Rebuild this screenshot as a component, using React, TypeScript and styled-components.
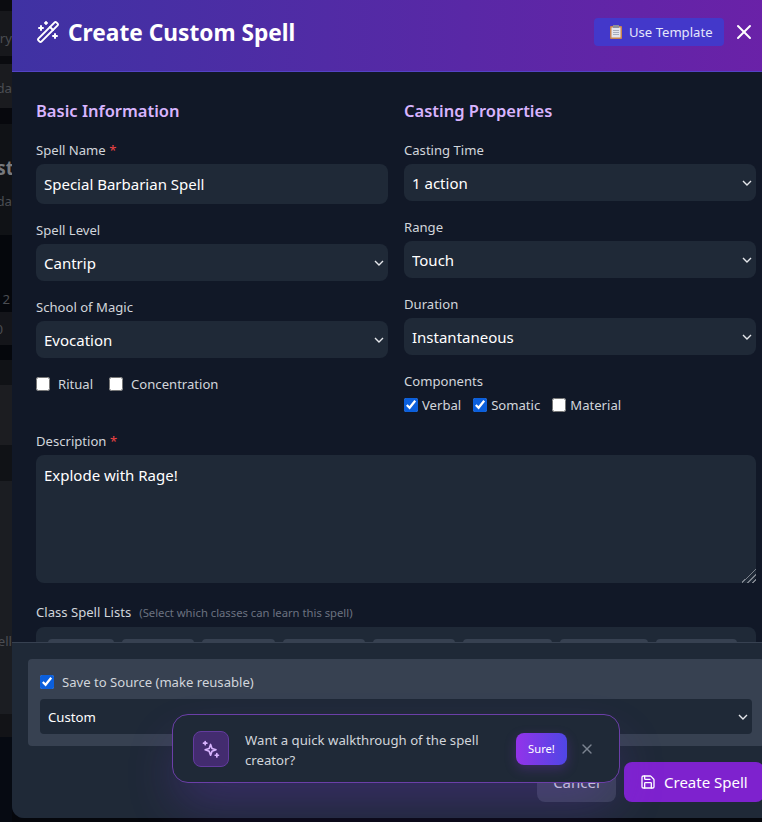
import React from "react"
import styled, { createGlobalStyle, css } from "styled-components"
import { Save, WandSparkles, X } from "lucide-react"

const GlobalStyle = createGlobalStyle`
  html, body {
    margin: 0;
    height: 100%;
    overflow: hidden;
    background: #05070c;
  }
  * {
    box-sizing: border-box;
  }
`

const fontStack = `"Noto Sans", "Open Sans", sans-serif`

const selectLook = css`
  display: block;
  width: 100%;
  padding: 0 8px;
  border: none;
  appearance: none;
  background: #1f2937
    url("data:image/svg+xml,%3Csvg xmlns='http://www.w3.org/2000/svg' width='10' height='6' viewBox='0 0 10 6'%3E%3Cpath d='M1 1l4 4 4-4' fill='none' stroke='%23e5e7eb' stroke-width='1.4'/%3E%3C/svg%3E")
    no-repeat right 4px center;
  color: #fff;
  font-family: inherit;
`

const Page = styled.div`
  position: relative;
  display: flex;
  align-items: flex-start;
  width: 762px;
  height: 822px;
  overflow: hidden;
  font-family: ${fontStack};
`

/* the dimmed page that peeks out left of the modal */
const Backdrop = styled.div`
  flex: none;
  display: flex;
  flex-direction: column;
  width: 12px;
  height: 822px;
  overflow: hidden;
`

const Sliver = styled.div<{ $h: number; $bg: string; $pt?: number }>`
  flex: none;
  display: flex;
  align-items: center;
  justify-content: flex-end;
  height: ${(p) => p.$h}px;
  padding-top: ${(p) => p.$pt ?? 0}px;
  background: ${(p) => p.$bg};
  color: #4b4d52;
  font-size: 13.2px;
  white-space: nowrap;
  overflow: hidden;
`

const SliverBold = styled.span`
  margin-right: -2px;
  color: #77797d;
  font-size: 19px;
  font-weight: 700;
`

const SliverDigit = styled.span<{ $right: number }>`
  margin-right: ${(p) => p.$right}px;
`

const Modal = styled.div`
  flex: none;
  display: flex;
  flex-direction: column;
  width: 768px;
  height: 818px;
  background: #111827;
  border-radius: 0 0 12px 12px;
  overflow: hidden;
`

const Header = styled.header`
  flex: none;
  display: flex;
  align-items: center;
  justify-content: space-between;
  height: 72px;
  padding: 0 24px 8px;
  background: linear-gradient(90deg, #3f32a3, #6b21a8);
  border-bottom: 1px solid #5343c4;
`

const Title = styled.h2`
  display: flex;
  align-items: center;
  gap: 8px;
  margin: 0;
  color: #fff;
  font-size: 22.7px;
  line-height: 32px;
  font-weight: 700;
`

const TitleText = styled.span`
  padding-top: 2px;
`

const HeaderActions = styled.div`
  display: flex;
  align-items: center;
  gap: 8px;
`

const TemplateButton = styled.button`
  display: flex;
  align-items: center;
  gap: 7px;
  height: 28px;
  width: 130px;
  padding: 0 0 0 16px;
  border: none;
  border-radius: 4px;
  background: #4338ca;
  color: #e5e7fb;
  font-family: inherit;
  font-size: 13.1px;
  white-space: nowrap;
`

const CloseButton = styled.button`
  display: flex;
  padding: 0;
  border: none;
  background: none;
  color: #fff;
`

const Body = styled.div`
  flex: 1;
  min-height: 0;
  padding: 24px 24px 0;
  overflow: hidden;
`

const Columns = styled.div`
  display: grid;
  grid-template-columns: 1fr 1fr;
  gap: 16px;
`

const SectionTitle = styled.h3`
  margin: 0 0 15px;
  padding-top: 1px;
  color: #d8b4fe;
  font-size: 16.5px;
  line-height: 28px;
  font-weight: 600;
`

const Field = styled.div`
  margin-bottom: 16px;
`

const DescriptionField = styled.div`
  margin: 16px 0 19px;
`

const Label = styled.label`
  display: block;
  margin-bottom: 4px;
  color: #d1d5db;
  font-size: 13.1px;
  line-height: 20px;
`

const Required = styled.span`
  color: #ef4444;
`

const TextInput = styled.input`
  display: block;
  width: 100%;
  height: 40px;
  padding: 0 8px;
  border: none;
  border-radius: 8px;
  background: #1f2937;
  color: #fff;
  font-family: inherit;
  font-size: 15px;
`

const Select = styled.select`
  ${selectLook}
  height: 37px;
  border-radius: 8px;
  font-size: 15px;
`

const CheckRow = styled.div<{ $gap: number }>`
  display: flex;
  align-items: center;
  gap: ${(p) => p.$gap}px;
`

const Check = styled.label<{ $gap: number }>`
  display: flex;
  align-items: center;
  gap: ${(p) => p.$gap}px;
  color: #d1d5db;
  font-size: 13.1px;
  line-height: 20px;
`

const Box = styled.input.attrs({ type: "checkbox" })`
  flex: none;
  width: 14px;
  height: 14px;
  margin: 0;
  accent-color: #0b5fdc;
`

const TextArea = styled.textarea`
  display: block;
  width: 100%;
  height: 128px;
  padding: 8px;
  border: none;
  border-radius: 8px;
  background: #1f2937;
  color: #fff;
  font-family: inherit;
  font-size: 15px;
  line-height: 24px;
  resize: vertical;

  &::-webkit-resizer {
    background: linear-gradient(
      135deg,
      transparent 50%,
      #7b818b 50% 56%,
      transparent 56% 68%,
      #7b818b 68% 74%,
      transparent 74% 86%,
      #7b818b 86% 92%,
      transparent 92%
    );
  }
`

const Hint = styled.span`
  margin-left: 8px;
  color: #6b7280;
  font-size: 11.25px;
`

const ClassPanel = styled.div`
  display: flex;
  gap: 8px;
  padding: 12px;
  border-radius: 8px;
  background: #1f2937;
`

const ClassChip = styled.button<{ $w: number }>`
  flex: none;
  width: ${(p) => p.$w}px;
  height: 34px;
  padding: 8px 0;
  border: none;
  border-radius: 4px;
  background: #374151;
  color: #d1d5db;
  font-family: inherit;
  font-size: 13px;
`

const Footer = styled.footer`
  flex: none;
  height: 176px;
  padding: 16px;
  background: #1f2937;
  border-top: 1px solid #374151;
`

const SourceBox = styled.div`
  display: flex;
  flex-direction: column;
  gap: 7px;
  height: 87px;
  padding: 13px 12px 12px;
  border-radius: 4px;
  background: #374151;
`

const SourceSelect = styled.select`
  ${selectLook}
  height: 35px;
  border-radius: 4px;
  font-size: 13.2px;
`

const FooterActions = styled.div`
  display: flex;
  justify-content: flex-end;
  gap: 8px;
  margin-top: 16px;
`

const CancelButton = styled.button`
  height: 40px;
  width: 79px;
  padding: 0;
  border: none;
  border-radius: 8px;
  background: #374151;
  color: #d1d5db;
  font-family: inherit;
  font-size: 15px;
`

const CreateButton = styled.button`
  display: flex;
  align-items: center;
  gap: 8px;
  width: 140px;
  height: 40px;
  padding: 0 0 0 16px;
  border: none;
  border-radius: 8px;
  background: #7e22ce;
  color: #fff;
  font-family: inherit;
  font-size: 15px;
  white-space: nowrap;
`

const Toast = styled.div`
  position: absolute;
  left: 172px;
  top: 714px;
  display: flex;
  align-items: center;
  gap: 16px;
  width: 448px;
  height: 69px;
  padding: 0 24px 0 20px;
  border: 1px solid #6b3fa8;
  border-radius: 16px;
  background: #1f2937;
  box-shadow: 0 25px 50px -6px rgba(126, 58, 234, 0.28);
`

const ToastIcon = styled.div`
  flex: none;
  display: flex;
  align-items: center;
  justify-content: center;
  width: 36px;
  height: 36px;
  border: 1px solid #633b9e;
  border-radius: 8px;
  background: #432c6f;
  color: #d8b4fe;
`

const ToastText = styled.p`
  flex: 1;
  margin: 0;
  padding-top: 2px;
  color: #d1d5db;
  font-size: 13.2px;
  line-height: 20px;
`

const SureButton = styled.button`
  flex: none;
  width: 51px;
  height: 32px;
  padding: 0;
  border: none;
  border-radius: 8px;
  background: linear-gradient(90deg, #9333ea, #4f46e5);
  box-shadow: 0 4px 12px rgba(147, 51, 234, 0.25);
  color: #fff;
  font-family: inherit;
  font-size: 11.2px;
`

const DismissButton = styled.button`
  flex: none;
  display: flex;
  margin-left: -4px;
  padding: 0;
  border: none;
  background: none;
  color: #7b8390;
`

const ClipboardIcon = () => (
  <svg width="12" height="14" viewBox="0 0 12 14">
    <rect x="0" y="1" width="12" height="13" rx="1" fill="#c9834f" />
    <rect x="1.5" y="2.5" width="9" height="10" fill="#e4e6ee" />
    <rect x="3" y="0" width="6" height="3" fill="#8d8f9c" />
    <path d="M3 5.5h6M3 7.5h6M3 9.5h6" stroke="#a9acbb" strokeWidth="1" />
  </svg>
)

const SparkleIcon = () => (
  <svg width="20" height="20" viewBox="0 0 24 24" fill="none" stroke="currentColor" strokeWidth="2" strokeLinejoin="round" strokeLinecap="round">
    <path d="M11.5 6.5l1.7 4.8 4.8 1.7-4.8 1.7-1.7 4.8-1.7-4.8L5 13l4.8-1.7z" />
    <path d="M5 3v4M3 5h4M19 17.5v4M17 19.5h4" />
  </svg>
)

const classes: [string, number][] = [
  ["Bard", 66],
  ["Cleric", 72],
  ["Druid", 73],
  ["Paladin", 82],
  ["Ranger", 82],
  ["Sorcerer", 89],
  ["Warlock", 88],
  ["Wizard", 81],
]

const App = () => {
  return (
    <Page>
      <GlobalStyle />
      <Backdrop>
        <Sliver $h={11} $bg="#0b0c10" />
        <Sliver $h={45} $bg="#17181c" $pt={8}>ry</Sliver>
        <Sliver $h={8} $bg="#0a0b0f" />
        <Sliver $h={44} $bg="#1a1b1f" $pt={4}>da</Sliver>
        <Sliver $h={16} $bg="#07080d" />
        <Sliver $h={24} $bg="#101216" />
        <Sliver $h={40} $bg="#101216"><SliverBold>st</SliverBold></Sliver>
        <Sliver $h={26} $bg="#101216">da</Sliver>
        <Sliver $h={21} $bg="#101216" />
        <Sliver $h={51} $bg="#05070c" />
        <Sliver $h={26} $bg="#05070c"><SliverDigit $right={2}>2</SliverDigit></Sliver>
        <Sliver $h={33} $bg="#14151a"><SliverDigit $right={9}>0</SliverDigit></Sliver>
        <Sliver $h={15} $bg="#05070c" />
        <Sliver $h={25} $bg="#101216" />
        <Sliver $h={60} $bg="#1c1d21" />
        <Sliver $h={36} $bg="#101216" />
        <Sliver $h={148} $bg="#1b1d22" />
        <Sliver $h={24} $bg="#1b1d22">ell</Sliver>
        <Sliver $h={61} $bg="#1b1d22" />
        <Sliver $h={23} $bg="#121317" />
        <Sliver $h={85} $bg="#060a12" />
      </Backdrop>

      <Modal>
        <Header>
          <Title>
            <WandSparkles size={24} />
            <TitleText>Create Custom Spell</TitleText>
          </Title>
          <HeaderActions>
            <TemplateButton>
              <ClipboardIcon />
              Use Template
            </TemplateButton>
            <CloseButton>
              <X size={24} />
            </CloseButton>
          </HeaderActions>
        </Header>

        <Body>
          <Columns>
            <div>
              <SectionTitle>Basic Information</SectionTitle>
              <Field>
                <Label>Spell Name <Required>*</Required></Label>
                <TextInput defaultValue="Special Barbarian Spell" />
              </Field>
              <Field>
                <Label>Spell Level</Label>
                <Select defaultValue="Cantrip">
                  <option>Cantrip</option>
                  <option>1st Level</option>
                </Select>
              </Field>
              <Field>
                <Label>School of Magic</Label>
                <Select defaultValue="Evocation">
                  <option>Abjuration</option>
                  <option>Evocation</option>
                </Select>
              </Field>
              <CheckRow $gap={16}>
                <Check $gap={8}><Box />Ritual</Check>
                <Check $gap={8}><Box />Concentration</Check>
              </CheckRow>
            </div>
            <div>
              <SectionTitle>Casting Properties</SectionTitle>
              <Field>
                <Label>Casting Time</Label>
                <Select defaultValue="1 action">
                  <option>1 action</option>
                  <option>1 bonus action</option>
                </Select>
              </Field>
              <Field>
                <Label>Range</Label>
                <Select defaultValue="Touch">
                  <option>Self</option>
                  <option>Touch</option>
                </Select>
              </Field>
              <Field>
                <Label>Duration</Label>
                <Select defaultValue="Instantaneous">
                  <option>Instantaneous</option>
                  <option>1 minute</option>
                </Select>
              </Field>
              <Label>Components</Label>
              <CheckRow $gap={12}>
                <Check $gap={4}><Box defaultChecked />Verbal</Check>
                <Check $gap={4}><Box defaultChecked />Somatic</Check>
                <Check $gap={4}><Box />Material</Check>
              </CheckRow>
            </div>
          </Columns>

          <DescriptionField>
            <Label>Description <Required>*</Required></Label>
            <TextArea defaultValue="Explode with Rage!" />
          </DescriptionField>

          <Label>
            Class Spell Lists
            <Hint>(Select which classes can learn this spell)</Hint>
          </Label>
          <ClassPanel>
            {classes.map(([name, width]) => (
              <ClassChip key={name} $w={width}>{name}</ClassChip>
            ))}
          </ClassPanel>
        </Body>

        <Footer>
          <SourceBox>
            <Check $gap={8}><Box defaultChecked />Save to Source (make reusable)</Check>
            <SourceSelect defaultValue="Custom">
              <option>Custom</option>
            </SourceSelect>
          </SourceBox>
          <FooterActions>
            <CancelButton>Cancel</CancelButton>
            <CreateButton>
              <Save size={16} />
              Create Spell
            </CreateButton>
          </FooterActions>
        </Footer>
      </Modal>

      <Toast>
        <ToastIcon>
          <SparkleIcon />
        </ToastIcon>
        <ToastText>Want a quick walkthrough of the spell creator?</ToastText>
        <SureButton>Sure!</SureButton>
        <DismissButton>
          <X size={16} />
        </DismissButton>
      </Toast>
    </Page>
  )
}

export default App
